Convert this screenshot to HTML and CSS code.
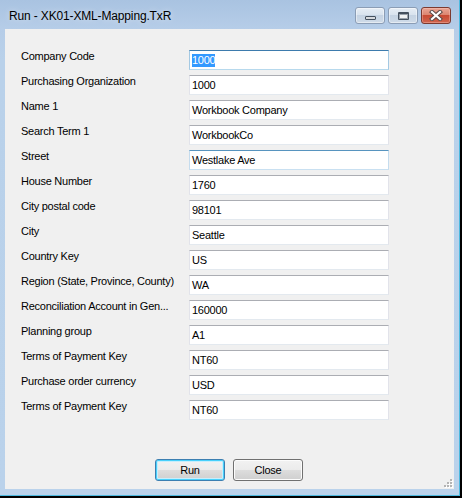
FILE: index.html
```html
<!DOCTYPE html>
<html>
<head>
<meta charset="utf-8">
<link rel="stylesheet" href="styles.css">
</head>
<body>
<div class="window">
  <div class="titlebar">
    <span class="title">Run - XK01-XML-Mapping.TxR</span>
    <div class="caption-buttons">
      <div class="cbtn min"><span class="g-min"></span></div>
      <div class="cbtn max"><span class="g-max"></span></div>
      <div class="cbtn close">
        <svg width="14" height="11" viewBox="0 0 14 11">
          <path d="M3 2 L11 9 M11 2 L3 9" stroke="#5a4a48" stroke-width="4.2" stroke-linecap="square" fill="none"/>
          <path d="M3 2 L11 9 M11 2 L3 9" stroke="#ffffff" stroke-width="2.2" stroke-linecap="square" fill="none"/>
        </svg>
      </div>
    </div>
  </div>
  <div class="client">
    <div class="form">
      <div class="row"><div class="label">Company Code</div><div class="textbox focus"><span class="sel">1000</span></div></div>
      <div class="row"><div class="label">Purchasing Organization</div><div class="textbox">1000</div></div>
      <div class="row"><div class="label">Name 1</div><div class="textbox">Workbook Company</div></div>
      <div class="row"><div class="label">Search Term 1</div><div class="textbox">WorkbookCo</div></div>
      <div class="row"><div class="label">Street</div><div class="textbox hover">Westlake Ave</div></div>
      <div class="row"><div class="label">House Number</div><div class="textbox">1760</div></div>
      <div class="row"><div class="label">City postal code</div><div class="textbox">98101</div></div>
      <div class="row"><div class="label">City</div><div class="textbox">Seattle</div></div>
      <div class="row"><div class="label">Country Key</div><div class="textbox">US</div></div>
      <div class="row"><div class="label">Region (State, Province, County)</div><div class="textbox">WA</div></div>
      <div class="row"><div class="label">Reconciliation Account in Gen...</div><div class="textbox">160000</div></div>
      <div class="row"><div class="label">Planning group</div><div class="textbox">A1</div></div>
      <div class="row"><div class="label">Terms of Payment Key</div><div class="textbox">NT60</div></div>
      <div class="row"><div class="label">Purchase order currency</div><div class="textbox">USD</div></div>
      <div class="row"><div class="label">Terms of Payment Key</div><div class="textbox">NT60</div></div>
    </div>
    <div class="actions">
      <div class="button default">Run</div>
      <div class="button">Close</div>
    </div>
    <svg class="grip" width="11" height="11" viewBox="0 0 11 11">
      <g fill="#ffffff">
        <rect x="9" y="3" width="2" height="2"/>
        <rect x="6" y="6" width="2" height="2"/><rect x="9" y="6" width="2" height="2"/>
        <rect x="3" y="9" width="2" height="2"/><rect x="6" y="9" width="2" height="2"/><rect x="9" y="9" width="2" height="2"/>
      </g>
      <g fill="#b4b4b4">
        <rect x="8" y="2" width="2" height="2"/>
        <rect x="5" y="5" width="2" height="2"/><rect x="8" y="5" width="2" height="2"/>
        <rect x="2" y="8" width="2" height="2"/><rect x="5" y="8" width="2" height="2"/><rect x="8" y="8" width="2" height="2"/>
      </g>
    </svg>
  </div>
</div>
</body>
</html>
```
FILE: styles.css
```css
* { box-sizing: border-box; }

html, body {
  margin: 0;
  padding: 0;
  background: #000000;
}

body {
  width: 462px;
  height: 498px;
  overflow: hidden;
}

.window {
  width: 460px;
  height: 496px;
  display: flex;
  flex-direction: column;
  background: linear-gradient(to bottom, #a9c3e1 0px, #b6cde8 29px, #b9d1ea 60px, #bad2eb 100%);
  border-right: 1px solid #4cb9df;
  border-bottom: 1px solid #4cb9df;
}

.titlebar {
  height: 29px;
  flex: none;
  display: flex;
  align-items: flex-start;
  justify-content: space-between;
  padding-left: 9px;
  padding-right: 8px;
}

.title {
  font-family: "Segoe UI", "Liberation Sans", Arial, sans-serif;
  font-size: 12px;
  letter-spacing: -0.15px;
  line-height: 16px;
  margin-top: 8px;
  color: #000000;
  text-shadow: 0 0 6px rgba(255, 255, 255, 0.6);
}

.caption-buttons {
  display: flex;
  gap: 3px;
  margin-top: 7px;
}

.cbtn {
  width: 30px;
  height: 17px;
  border-radius: 3px;
  display: flex;
  align-items: center;
  justify-content: center;
}

.cbtn.min,
.cbtn.max {
  border: 1px solid #8b9db5;
  background: linear-gradient(to bottom, #e6edf5 0%, #d9e3ee 45%, #c5d3e3 50%, #cfdbe8 100%);
  box-shadow: inset 0 0 0 1px rgba(255, 255, 255, 0.45);
}

.g-min {
  width: 11px;
  height: 4px;
  margin-top: 5px;
  border: 1px solid #44505e;
  border-radius: 1px;
  background: #d6d9dd;
}

.g-max {
  width: 11px;
  height: 8px;
  border: 1px solid #44505e;
  border-top-width: 2px;
  border-radius: 1px;
  background: #f0f2f4;
  box-shadow: inset 0 0 0 1px #9aa3ad;
}

.cbtn.close {
  border: 1px solid #7c3a30;
  background: linear-gradient(to bottom, #e9a595 0%, #dc8570 45%, #c84a33 50%, #d0654e 100%);
  box-shadow: inset 0 0 0 1px rgba(255, 210, 200, 0.35);
}

.client {
  position: relative;
  flex: none;
  width: 449px;
  height: 460px;
  margin: 0 5px 0 5px;
  background: #f0f0f0;
  font-family: "Liberation Sans", Arial, sans-serif;
  font-size: 11px;
  letter-spacing: -0.25px;
  color: #000000;
}

.form {
  display: flex;
  flex-direction: column;
  gap: 5px;
  padding-top: 21px;
  padding-left: 16px;
}

.row {
  display: flex;
  height: 20px;
}

.label {
  width: 168px;
  line-height: 13px;
  white-space: nowrap;
}

.textbox {
  width: 200px;
  height: 20px;
  padding: 0 2px;
  line-height: 18px;
  background: #ffffff;
  border: 1px solid #e2e3ea;
  border-top-color: #abadb3;
  border-bottom-color: #e3e9ef;
  white-space: nowrap;
  display: flex;
  align-items: center;
}

.textbox.focus {
  border-color: #a4c9e3;
  border-top-color: #3d7bad;
  border-bottom-color: #b7d9ed;
}

.textbox.hover {
  border-color: #c5dcee;
  border-top-color: #5794bf;
  border-bottom-color: #c9e0f1;
}

.sel {
  display: inline-block;
  line-height: 13px;
  background: #3399ff;
  color: #ffffff;
}

.actions {
  display: flex;
  gap: 8px;
  margin-top: 39px;
  padding-left: 150px;
}

.button {
  width: 70px;
  height: 22px;
  border: 1px solid #707070;
  border-radius: 3px;
  background: linear-gradient(to bottom, #f2f2f2 0%, #ebebeb 50%, #dddddd 50%, #cfcfcf 100%);
  box-shadow: inset 0 0 0 1px #fcfcfc;
  display: flex;
  align-items: center;
  justify-content: center;
  line-height: 13px;
  padding-top: 1px;
}

.button.default {
  border-color: #3c7fb1;
  box-shadow: inset 0 0 0 1px #48d0fb, inset 0 0 0 2px #c7eefc;
  background: linear-gradient(to bottom, #eaf6fd 0%, #d9f0fc 50%, #bee6fd 50%, #a7d9f5 100%);
  background: linear-gradient(to bottom, #f2f2f2 0%, #ebebeb 50%, #dddddd 50%, #cfcfcf 100%);
}

.grip {
  position: absolute;
  right: 1px;
  bottom: 1px;
}
```
